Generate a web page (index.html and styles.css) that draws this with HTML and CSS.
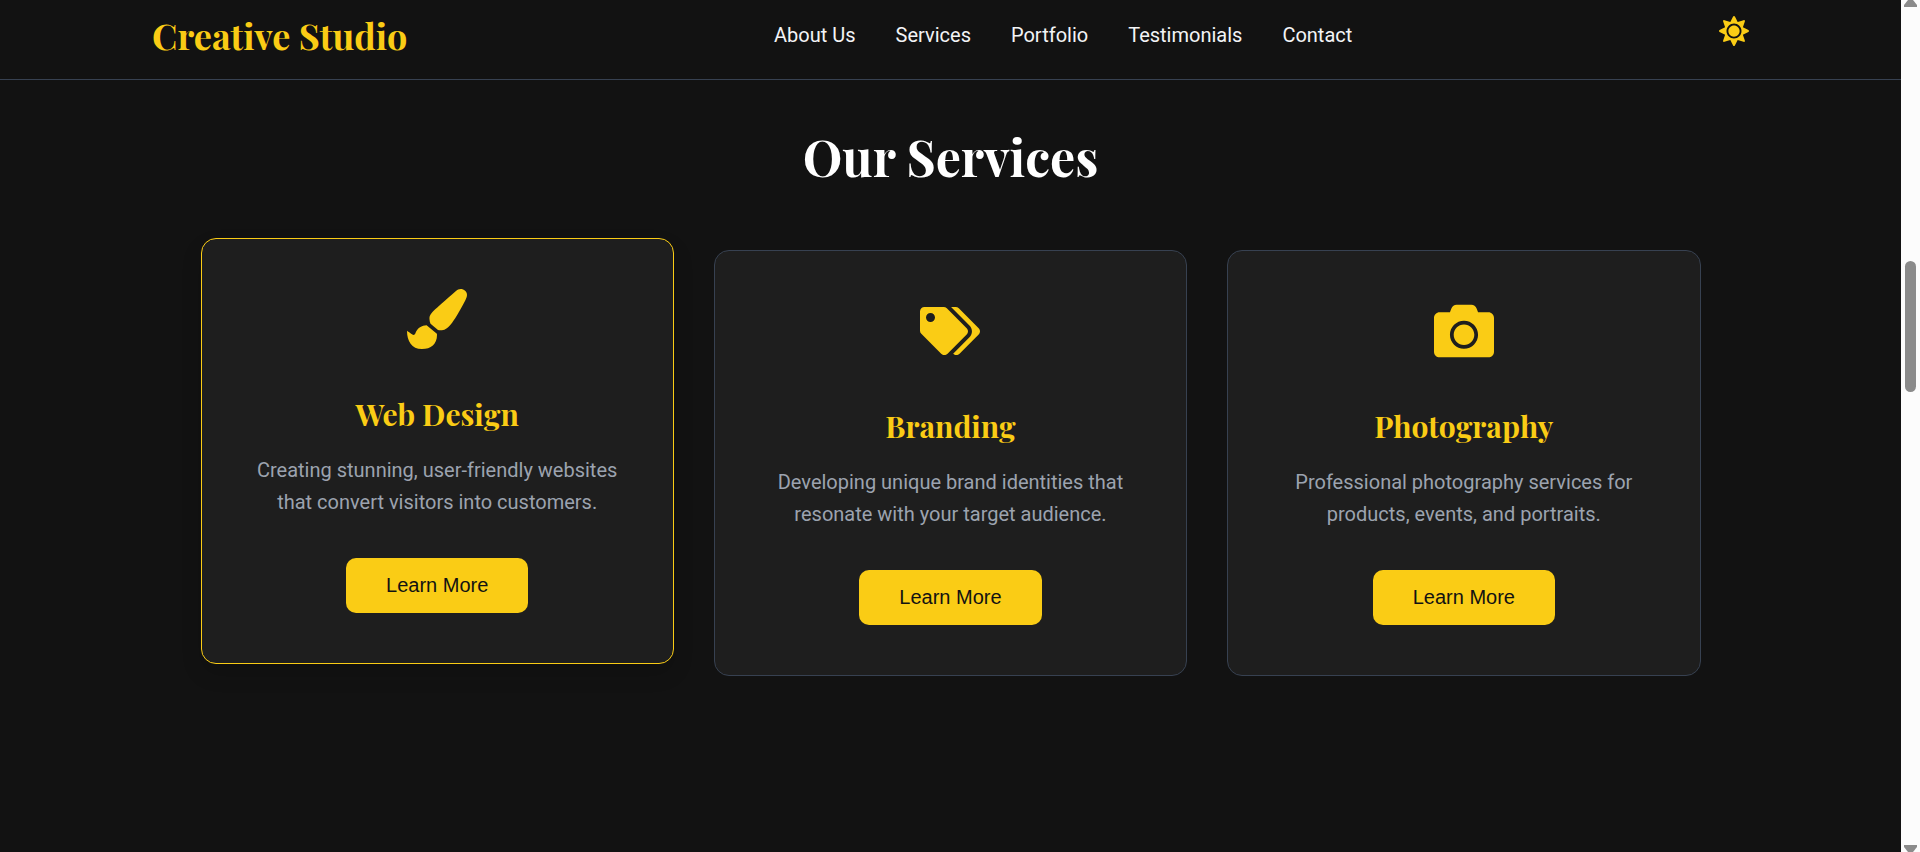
FILE: index.html
```html
<!DOCTYPE html>
<html lang="en">
<head>
<meta charset="utf-8">
<title>Creative Studio</title>
<link rel="stylesheet" href="styles.css">
</head>
<body>
<div class="page">
  <header class="header">
    <a class="logo" href="#home">Creative Studio</a>
    <nav class="nav">
      <a href="#about">About Us</a>
      <a href="#services">Services</a>
      <a href="#portfolio">Portfolio</a>
      <a href="#testimonials">Testimonials</a>
      <a href="#contact">Contact</a>
    </nav>
    <button class="theme" type="button" aria-label="Switch theme">
      <svg viewBox="0 0 512 512" aria-hidden="true"><path d="M256 160c-52.9 0-96 43.1-96 96s43.1 96 96 96 96-43.1 96-96-43.1-96-96-96zm246.4 80.5l-94.7-47.3 33.5-100.4c4.5-13.6-8.4-26.5-21.9-21.9l-100.4 33.5-47.4-94.8c-6.4-12.8-24.6-12.8-31 0l-47.3 94.7L92.7 70.8c-13.6-4.5-26.5 8.4-21.9 21.9l33.5 100.4-94.7 47.4c-12.8 6.4-12.8 24.6 0 31l94.7 47.3-33.5 100.5c-4.5 13.6 8.4 26.5 21.9 21.9l100.4-33.5 47.3 94.7c6.4 12.8 24.6 12.8 31 0l47.3-94.7 100.4 33.5c13.6 4.5 26.5-8.4 21.9-21.9l-33.5-100.4 94.7-47.3c13-6.5 13-24.7.2-31.1zm-155.9 106c-49.9 49.9-131.1 49.9-181 0-49.9-49.9-49.9-131.1 0-181 49.9-49.9 131.1-49.9 181 0 49.9 49.9 49.9 131.1 0 181z"/></svg>
    </button>
  </header>
  <main class="services" id="services">
    <h2 class="title">Our Services</h2>
    <div class="cards">
      <article class="card card-active">
        <svg class="icon" viewBox="0 0 512 512" aria-hidden="true"><path d="M167.02 309.34c-40.12 2.58-76.53 17.86-97.19 72.3-2.35 6.21-8 9.98-14.59 9.98-11.11 0-45.46-27.67-55.25-34.35C0 439.62 37.93 512 128 512c75.86 0 128-43.77 128-120.19 0-3.11-.65-6.08-.97-9.13l-88.01-73.34zM457.89 0c-15.16 0-29.37 6.71-40.21 16.45C213.27 199.05 192 203.34 192 257.09c0 13.7 3.25 26.76 8.73 38.7l63.82 53.18c7.21 1.8 14.64 3.03 22.39 3.03 62.11 0 98.11-45.47 211.16-256.46 7.38-14.35 13.9-29.85 13.9-45.99C512 20.64 486 0 457.89 0z"/></svg>
        <h3 class="name">Web Design</h3>
        <p class="text">Creating stunning, user-friendly websites that convert visitors into customers.</p>
        <button class="more" type="button">Learn More</button>
      </article>
      <article class="card">
        <svg class="icon" viewBox="0 0 640 512" aria-hidden="true"><path d="M497.941 225.941L286.059 14.059A48 48 0 0 0 252.118 0H48C21.49 0 0 21.49 0 48v204.118a48 48 0 0 0 14.059 33.941l211.882 211.882c18.744 18.745 49.136 18.746 67.882 0l204.118-204.118c18.745-18.745 18.745-49.137 0-67.882zM112 160c-26.51 0-48-21.49-48-48s21.49-48 48-48 48 21.49 48 48-21.49 48-48 48zm513.941 133.823L421.823 497.941c-18.745 18.745-49.137 18.745-67.882 0l-.36-.36L527.64 323.522c16.999-16.999 26.36-39.6 26.36-63.64s-9.362-46.641-26.36-63.64L331.397 0h48.721a48 48 0 0 1 33.941 14.059l211.882 211.882c18.745 18.745 18.745 49.137 0 67.882z"/></svg>
        <h3 class="name">Branding</h3>
        <p class="text">Developing unique brand identities that resonate with your target audience.</p>
        <button class="more" type="button">Learn More</button>
      </article>
      <article class="card">
        <svg class="icon" viewBox="0 0 512 512" aria-hidden="true"><path d="M512 144v288c0 26.5-21.5 48-48 48H48c-26.5 0-48-21.5-48-48V144c0-26.5 21.5-48 48-48h88l12.3-32.9c7-18.7 24.9-31.1 44.9-31.1h125.5c20 0 37.9 12.4 44.9 31.1L376 96h88c26.5 0 48 21.5 48 48zM376 288c0-66.2-53.8-120-120-120s-120 53.8-120 120 53.8 120 120 120 120-53.8 120-120zm-32 0c0 48.5-39.5 88-88 88s-88-39.5-88-88 39.5-88 88-88 88 39.5 88 88z"/></svg>
        <h3 class="name">Photography</h3>
        <p class="text">Professional photography services for products, events, and portraits.</p>
        <button class="more" type="button">Learn More</button>
      </article>
    </div>
  </main>
</div>
<div class="scrollbar" aria-hidden="true">
  <svg class="arrow" viewBox="0 0 13 7"><path d="M4 0h5l4 5v2H0V5z"/></svg>
  <div class="track"><div class="thumb"></div></div>
  <svg class="arrow" viewBox="0 0 13 7"><path d="M0 0h13v2L9 7H4L0 2z"/></svg>
</div>
</body>
</html>
```
FILE: styles.css
```css
* {
  box-sizing: border-box;
}

body {
  margin: 0;
  display: flex;
  height: 100vh;
  overflow: hidden;
  background: #121212;
  color: #ffffff;
  font-family: Roboto, "Liberation Sans", sans-serif;
  font-size: 20px;
  line-height: 32px;
}

.page {
  flex: 1;
  min-width: 0;
}

.header {
  display: flex;
  justify-content: space-between;
  align-items: flex-start;
  padding: 16px 8% 25px;
  border-bottom: 1px solid #374151;
}

.logo {
  color: #facc15;
  font-family: "Playfair Display", "Liberation Serif", serif;
  font-size: 36px;
  font-weight: 700;
  line-height: 38px;
  text-decoration: none;
}

.nav {
  display: flex;
  gap: 40px;
  padding-top: 3px;
}

.nav a {
  color: #f3f4f6;
  text-decoration: none;
}

.theme {
  width: 30px;
  height: 30px;
  padding: 0;
  border: 0;
  background: none;
}

.theme svg {
  display: block;
  width: 100%;
  fill: #facc15;
}

.services {
  padding: 40px 8%;
}

.title {
  margin: 0 0 56px;
  font-family: "Playfair Display", "Liberation Serif", serif;
  font-size: 50px;
  font-weight: 700;
  line-height: 74px;
  text-align: center;
}

.cards {
  display: grid;
  grid-template-columns: repeat(3, 1fr);
  gap: 40px;
  max-width: 1500px;
  margin: 0 auto;
}

.card {
  display: flex;
  flex-direction: column;
  align-items: center;
  padding: 50px;
  border: 1px solid #374151;
  border-radius: 15px;
  background: #1e1e1e;
  text-align: center;
}

.card-active {
  border-color: #facc15;
  box-shadow: 0 10px 20px rgba(0, 0, 0, 0.15);
  transform: translateY(-12px);
}

.icon {
  width: 60px;
  height: 60px;
  fill: #facc15;
}

.name {
  margin: 41px 0 16px;
  color: #facc15;
  font-family: "Playfair Display", "Liberation Serif", serif;
  font-size: 30px;
  font-weight: 700;
  line-height: 48px;
}

.text {
  margin: 0 0 40px;
  color: #9ca3af;
}

.more {
  padding: 16px 40px;
  border: 0;
  border-radius: 10px;
  background: #facc15;
  color: #121212;
  font-family: "Liberation Sans", Arial, sans-serif;
  font-size: 20px;
  line-height: 23px;
}

.scrollbar {
  display: flex;
  flex-direction: column;
  align-items: center;
  width: 19px;
  background: #fcfcfc;
}

.arrow {
  width: 13px;
  height: 7px;
  fill: #8b8b8b;
}

.track {
  flex: 1;
  padding-top: 254px;
}

.thumb {
  width: 11px;
  height: 131px;
  border-radius: 6px;
  background: #8b8b8b;
}
```
